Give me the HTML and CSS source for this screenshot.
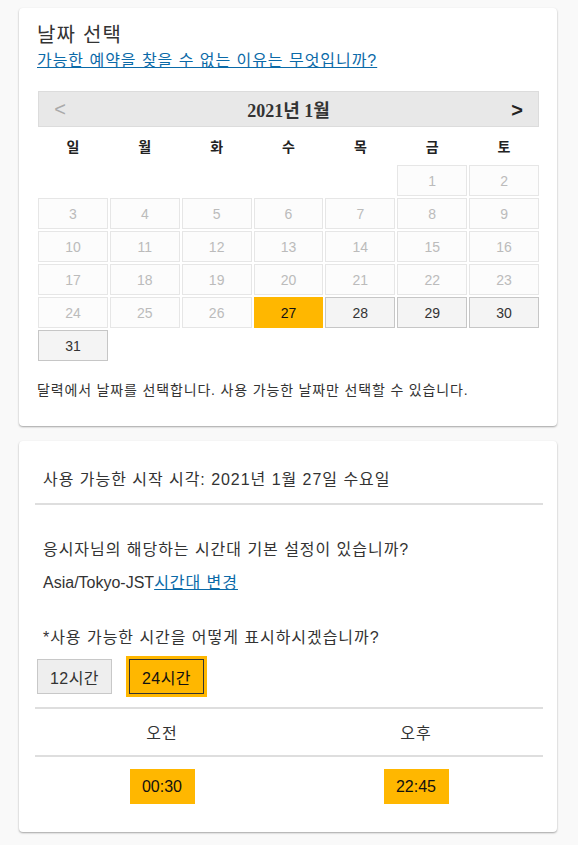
FILE: index.html
```html
<!DOCTYPE html>
<html lang="ko">
<head>
<meta charset="utf-8">
<title>날짜 선택</title>
<link rel="stylesheet" href="styles.css">
</head>
<body>
<main class="page">
  <section class="card card-date">
    <h1 class="title ko">날짜 선택</h1>
    <a class="link why ko" href="#">가능한 예약을 찾을 수 없는 이유는 무엇입니까?</a>
    <div class="calendar">
      <div class="cal-head">
        <span class="nav prev">&lt;</span>
        <span class="month">2021년 1월</span>
        <span class="nav next">&gt;</span>
      </div>
      <div class="dow">
        <span>일</span><span>월</span><span>화</span><span>수</span><span>목</span><span>금</span><span>토</span>
      </div>
      <div class="days">
        <span class="blank"></span><span class="blank"></span><span class="blank"></span><span class="blank"></span><span class="blank"></span>
        <span class="day off">1</span><span class="day off">2</span>
        <span class="day off">3</span><span class="day off">4</span><span class="day off">5</span><span class="day off">6</span><span class="day off">7</span><span class="day off">8</span><span class="day off">9</span>
        <span class="day off">10</span><span class="day off">11</span><span class="day off">12</span><span class="day off">13</span><span class="day off">14</span><span class="day off">15</span><span class="day off">16</span>
        <span class="day off">17</span><span class="day off">18</span><span class="day off">19</span><span class="day off">20</span><span class="day off">21</span><span class="day off">22</span><span class="day off">23</span>
        <span class="day off">24</span><span class="day off">25</span><span class="day off">26</span><span class="day selected">27</span><span class="day on">28</span><span class="day on">29</span><span class="day on">30</span>
        <span class="day on">31</span>
      </div>
    </div>
    <p class="hint ko">달력에서 날짜를 선택합니다. 사용 가능한 날짜만 선택할 수 있습니다.</p>
  </section>

  <section class="card card-time">
    <h2 class="subhead ko">사용 가능한 시작 시각: 2021년 1월 27일 수요일</h2>
    <p class="q q1 ko">응시자님의 해당하는 시간대 기본 설정이 있습니까?</p>
    <p class="q q2">Asia/Tokyo-JST<a class="link ko" href="#">시간대 변경</a></p>
    <p class="q q3 ko">*사용 가능한 시간을 어떻게 표시하시겠습니까?</p>
    <div class="toggle">
      <button class="btn">12시간</button>
      <button class="btn active">24시간</button>
    </div>
    <div class="periods ko">
      <span>오전</span>
      <span>오후</span>
    </div>
    <div class="slots">
      <div class="slot-col"><button class="slot">00:30</button></div>
      <div class="slot-col"><button class="slot">22:45</button></div>
    </div>
  </section>
</main>
</body>
</html>
```

FILE: styles.css
```css
* { box-sizing: border-box; }

body {
  margin: 0;
  background: #f9f9f9;
  font-family: "Liberation Sans", "Noto Sans CJK KR", sans-serif;
  color: #333;
}

.ko { letter-spacing: 0.06em; }

.page {
  padding: 8px 21px 14px 19px;
  display: flex;
  flex-direction: column;
  gap: 15px;
}

.card {
  background: #fff;
  border-radius: 4px;
  box-shadow: 0 1px 2px rgba(0, 0, 0, 0.35);
}

.card-date {
  padding: 14px 18px 26px 18px;
  display: flex;
  flex-direction: column;
}

.title {
  margin: 0;
  font-size: 20px;
  font-weight: normal;
  line-height: 26px;
  color: #333;
}

.link {
  color: #0b6aa8;
  text-decoration: underline;
}

.why {
  font-size: 16px;
  line-height: 24px;
  margin-top: 1px;
  align-self: flex-start;
}

.calendar {
  margin: 18px 0 0 1px;
}

.cal-head {
  height: 36px;
  background: #e8e8e8;
  border: 1px solid #dcdcdc;
  display: flex;
  align-items: center;
  justify-content: space-between;
  padding: 0 14px 0 14px;
}

.month {
  font-family: "Liberation Serif", "Noto Sans CJK KR", serif;
  font-weight: bold;
  font-size: 18px;
  color: #333;
}

.nav {
  font-family: "Liberation Sans", sans-serif;
  font-size: 20px;
  width: 14px;
  text-align: center;
}

.prev { color: #aaa; }
.next { color: #222; font-weight: bold; padding-top: 2px; }

.dow {
  display: grid;
  grid-template-columns: repeat(7, 1fr);
  column-gap: 2px;
  height: 38px;
  align-items: center;
  font-size: 14px;
  font-weight: bold;
  text-align: center;
  color: #222;
}

.days {
  display: grid;
  grid-template-columns: repeat(7, 1fr);
  gap: 2px;
  grid-auto-rows: 31px;
}

.day {
  display: flex;
  align-items: center;
  justify-content: center;
  font-size: 14px;
  border: 1px solid;
}

.off {
  background: #fcfcfc;
  border-color: #e6e6e6;
  color: #bbb;
}

.on {
  background: #f4f4f4;
  border-color: #c6c6c6;
  color: #333;
}

.selected {
  background: #ffb700;
  border-color: #ffb700;
  color: #111;
}

.hint {
  margin: 19px 0 0 0;
  font-size: 14px;
  line-height: 20px;
  color: #333;
}

.card-time {
  padding: 27px 14px 28px 16px;
}

.subhead {
  margin: 0;
  padding: 0 8px 11px 8px;
  font-size: 16px;
  font-weight: normal;
  line-height: 24px;
  border-bottom: 2px solid #dedede;
  color: #333;
}

.q {
  margin: 0;
  padding: 0 8px;
  font-size: 16px;
  line-height: 24px;
}

.q1 { margin-top: 33px; }
.q2 { margin-top: 9px; }
.q3 { margin-top: 31px; }

.toggle {
  display: flex;
  gap: 17px;
  margin: 9px 0 13px 2px;
}

.btn {
  width: 75px;
  height: 35px;
  font: inherit;
  font-size: 16px;
  letter-spacing: 0.03em;
  color: #333;
  background: #eee;
  border: 1px solid #c8c8c8;
  padding: 0;
}

.btn.active {
  background: #ffb700;
  border-color: #333;
  color: #111;
  box-shadow: 0 0 0 3px #ffb700;
}

.periods {
  display: grid;
  grid-template-columns: 1fr 1fr;
  height: 50px;
  align-items: center;
  text-align: center;
  font-size: 16px;
  border-top: 2px solid #dedede;
  border-bottom: 2px solid #dedede;
}

.slots {
  display: grid;
  grid-template-columns: 1fr 1fr;
  padding-top: 12px;
}

.slot-col {
  display: flex;
  justify-content: center;
}

.slot {
  width: 65px;
  height: 35px;
  font: inherit;
  font-size: 16px;
  color: #111;
  background: #ffb700;
  border: none;
  padding: 0;
}
```
